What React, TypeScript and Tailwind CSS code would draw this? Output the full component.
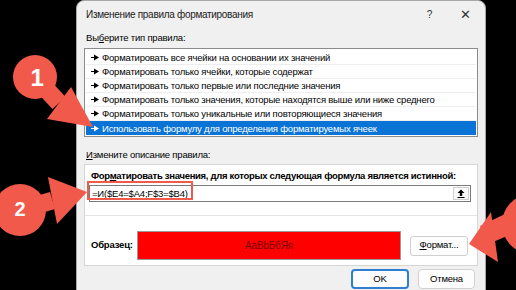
import React from "react";

const rules = [
  "Форматировать все ячейки на основании их значений",
  "Форматировать только ячейки, которые содержат",
  "Форматировать только первые или последние значения",
  "Форматировать только значения, которые находятся выше или ниже среднего",
  "Форматировать только уникальные или повторяющиеся значения",
  "Использовать формулу для определения форматируемых ячеек",
];

function Marker({ white }: { white?: boolean }) {
  const c = white ? "#ffffff" : "#000000";
  return (
    <svg width="8" height="7" viewBox="0 0 8 7" className="shrink-0">
      <rect x="0" y="3" width="4" height="1" fill={c} />
      <polygon points="3,0.5 8,3.5 3,6.5" fill={c} />
    </svg>
  );
}

export default function App() {
  return (
    <div className="relative w-[516px] h-[290px] overflow-hidden bg-black flex font-['Liberation_Sans',Arial,sans-serif] text-[9.5px] tracking-[-0.2px] text-black">
      <div className="ml-[76px] w-[410px] h-[300px] shrink-0 bg-[#f0f0f0] border border-[#a8a8a8] rounded-t-[8px] flex flex-col">
        {/* title */}
        <div className="h-[26px] flex items-center pl-[9px] pr-[14px]">
          <span className="text-[10px] tracking-[-0.3px] text-[#1a1a1a]">Изменение правила форматирования</span>
          <span className="ml-auto text-[10px] text-[#333]">?</span>
          <span className="ml-[28px] text-[13px] leading-none text-[#333]">✕</span>
        </div>
        <div className="px-[7px] flex flex-col">
          <div className="mt-[4px] h-[14px] leading-[14px] pl-[2px]">
            Вы<span className="underline">б</span>ерите тип правила:
          </div>
          <div className="mt-[3px] border border-[#8c8c8c] bg-white pt-[2px] pb-[1px] px-[1px]">
            {rules.map((r, i) => {
              const sel = i === rules.length - 1;
              return (
                <div
                  key={r}
                  className={
                    sel
                      ? "h-[14px] flex items-center gap-[3px] pl-[5px] bg-[#0a74d6] text-white"
                      : "h-[14px] flex items-center gap-[3px] pl-[5px] border-b border-[#eeeeee]"
                  }
                >
                  <Marker white={sel} />
                  <span className="whitespace-nowrap leading-[13px]">{r}</span>
                </div>
              );
            })}
          </div>
          <div className="mt-[11px] h-[14px] leading-[14px] pl-[2px]">
            <span className="underline">И</span>змените описание правила:
          </div>
          <div className="mt-[2px] h-[102px] border border-[#d6d6d6] bg-white pl-[4px] pr-[6px] flex flex-col">
            <div className="mt-[4px] h-[14px] leading-[14px] pl-[2px] font-bold whitespace-nowrap tracking-[-0.3px]">
              Фор<span className="underline">м</span>атировать значения, для которых следующая формула является истинной:
            </div>
            <div className="mt-[2px] h-[17px] border border-[#7a7a7a] flex items-center pl-[2px] pr-[1px]">
              <span className="leading-none">=И($E4=$A4;F$3=$B4)</span>
              <div className="ml-auto w-[16px] h-[13px] border border-[#cfcfcf] bg-[#fafafa] flex items-center justify-center">
                <svg width="8" height="9" viewBox="0 0 8 9">
                  <polygon points="4,0.5 7.5,4 5.2,4 5.2,7 2.8,7 2.8,4 0.5,4" fill="#000" />
                  <rect x="0.5" y="8" width="7" height="1" fill="#000" />
                </svg>
              </div>
            </div>
            <div className="mt-[13px] -ml-[4px] -mr-[6px] h-px bg-[#e4e4e4]" />
            <div className="mt-[15px] flex items-center">
              <div className="w-[48px] pl-[2px] font-bold">Образец:</div>
              <div className="w-[264px] h-[29px] border border-[#9a9a9a] bg-[#ff0000] flex items-center justify-center text-[#7a0000] text-[10px]">
                AaBbБбЯя
              </div>
              <div className="ml-[9px] w-[58px] h-[20px] border border-[#d0d0d0] rounded-[3px] bg-[#fdfdfd] flex items-center justify-center">
                <span className="underline">Ф</span>ормат...
              </div>
            </div>
          </div>
          <div className="mt-[3px] flex justify-end gap-[9px] pr-[3px]">
            <div className="w-[58px] h-[20px] border-2 border-[#2f7fd1] rounded-[4px] bg-[#fdfdfd] flex items-center justify-center">
              OK
            </div>
            <div className="w-[57px] h-[20px] border border-[#d0d0d0] rounded-[4px] bg-[#fdfdfd] flex items-center justify-center">
              Отмена
            </div>
          </div>
        </div>
      </div>

      {/* annotation: red box around formula */}
      <div className="absolute left-[87px] top-[181px] w-[106px] h-[19px] border-[2.5px] border-[#f15a4b]" />

      {/* annotation arrows */}
      <svg className="absolute left-0 top-0" width="516" height="290" viewBox="0 0 516 290">
        <g fill="#f15a4b">
          <circle cx="35" cy="77" r="22" />
          <polygon points="28.4,83.1 41.6,70.9 65.6,96.9 52.4,109.1" />
          <polygon points="71,87 47,119 93,127" />

          <circle cx="20" cy="210" r="26" />
          <polygon points="17.5,201.4 22.5,218.6 55,209.1 50,191.9" />
          <polygon points="48,177 87,192 57,224" />

          <circle cx="532" cy="224" r="30" />
          <polygon points="505,214 512,234 486,245 480,226" />
          <polygon points="491,212 469,244 498,262" />
        </g>
        <text x="37" y="86" fontSize="24" fontWeight="700" fill="#fff" textAnchor="middle" fontFamily="Liberation Sans, Arial, sans-serif">1</text>
        <text x="20" y="216" fontSize="20" fontWeight="700" fill="#fff" textAnchor="middle" fontFamily="Liberation Sans, Arial, sans-serif">2</text>
      </svg>
    </div>
  );
}
